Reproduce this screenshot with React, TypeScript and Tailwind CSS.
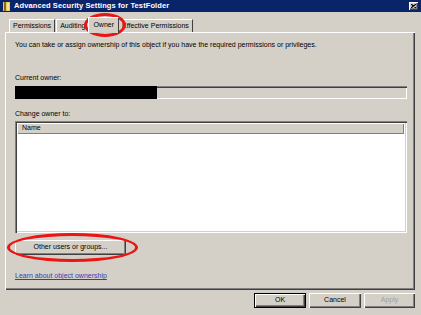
import React from 'react'

const bevelOut = 'shadow-[inset_1px_1px_#ffffff,inset_-1px_-1px_#404040,inset_-2px_-2px_#808080]'
const bevelIn = 'shadow-[inset_1px_1px_#808080,inset_2px_2px_#404040,inset_-1px_-1px_#ffffff,inset_-2px_-2px_#d4d0c8]'

function Tab({ label, active }: { label: string; active?: boolean }) {
  if (active) {
    return (
      <div className="relative z-10 -mb-px h-[16px] px-[4px] bg-[#d4d0c8] border-t border-l border-white border-r border-r-[#404040] flex items-center text-[7px] -mx-[1px]">
        {label}
      </div>
    )
  }
  return (
    <div className="h-[13px] px-[3px] border-t border-l border-white border-r border-r-[#404040] flex items-center text-[7px]">
      {label}
    </div>
  )
}

function Button({ label, isDefault, disabled, className = '' }: { label: string; isDefault?: boolean; disabled?: boolean; className?: string }) {
  return (
    <div
      className={`h-[15px] flex items-center justify-center text-[7px] bg-[#d4d0c8] ${
        isDefault ? 'border border-black shadow-[inset_1px_1px_#ffffff,inset_-1px_-1px_#404040,inset_-2px_-2px_#808080]' : bevelOut
      } ${disabled ? 'text-[#a0a0a0]' : 'text-black'} ${className}`}
    >
      {label}
    </div>
  )
}

export default function App() {
  return (
    <div
      className="relative w-[421px] h-[315px] overflow-hidden bg-[#d4d0c8] flex flex-col text-black"
      style={{ fontFamily: '"Liberation Sans", Arial, sans-serif' }}
    >
      {/* Title bar */}
      <div className="h-[12px] bg-[#0a246a] flex items-center pl-[3px] pr-[3px]">
        <svg width="7" height="9" viewBox="0 0 7 9">
          <rect x="0" y="0" width="7" height="9" fill="#e8c75a" />
          <rect x="1" y="0" width="2" height="9" fill="#8a6a1c" />
          <rect x="4" y="1" width="2" height="7" fill="#f6e29a" />
        </svg>
        <span className="ml-[4px] text-white font-bold text-[7.5px] leading-none tracking-[0.1px]">
          Advanced Security Settings for TestFolder
        </span>
        <div className={`ml-auto w-[9px] h-[8px] bg-[#d4d0c8] ${bevelOut} flex items-center justify-center`}>
          <svg width="5" height="4" viewBox="0 0 5 4">
            <path d="M0 0 L5 4 M5 0 L0 4" stroke="#000" strokeWidth="1.2" />
          </svg>
        </div>
      </div>

      {/* Tabs + panel */}
      <div className="pl-[5px] pr-[6px] pt-[5px]">
        <div className="h-[15px] flex items-end pl-[4px]">
          <Tab label="Permissions" />
          <div className="w-[1px]" />
          <Tab label="Auditing" />
          <Tab label="Owner" active />
          <Tab label="Effective Permissions" />
        </div>
        <div className={`h-[258px] ${bevelOut} pl-[10px] pr-[8px] pt-[9px] flex flex-col`}>
          <p className="text-[7px] leading-[8px]">
            You can take or assign ownership of this object if you have the required permissions or privileges.
          </p>

          <p className="text-[7px] leading-[8px] mt-[25px]">Current owner:</p>
          <div className={`mt-[4px] h-[13px] w-[392px] ${bevelIn} flex`}>
            <div className="w-[142px] h-full bg-black" />
          </div>

          <p className="text-[7px] leading-[8px] mt-[11px]">Change owner to:</p>
          <div className={`mt-[3px] h-[112px] w-[392px] bg-white ${bevelIn} p-[2px] flex flex-col`}>
            <div className="h-[11px] bg-[#d4d0c8] shadow-[inset_1px_1px_#ffffff,inset_-1px_-1px_#808080] text-[7px] flex items-center pl-[5px] mr-[1px]">
              Name
            </div>
          </div>

          <Button label="Other users or groups..." className="mt-[7px] w-[111px]" />

          <a className="mt-[17px] text-[7px] leading-[8px] text-[#3a3ab0] underline w-fit">
            Learn about object ownership
          </a>
        </div>
      </div>

      {/* Footer buttons */}
      <div className="mt-[3px] flex justify-end gap-[3px] pr-[6px]">
        <Button label="OK" isDefault className="w-[52px]" />
        <Button label="Cancel" className="w-[52px]" />
        <Button label="Apply" disabled className="w-[51px]" />
      </div>

      {/* annotation ellipses */}
      <div className="absolute left-[84px] top-[13px] w-[42px] h-[24px] rounded-[50%] border-[3px] border-[#ea1515]" />
      <div className="absolute left-[7px] top-[233px] w-[131px] h-[29px] rounded-[50%] border-[3px] border-[#ea1515]" />
    </div>
  )
}
